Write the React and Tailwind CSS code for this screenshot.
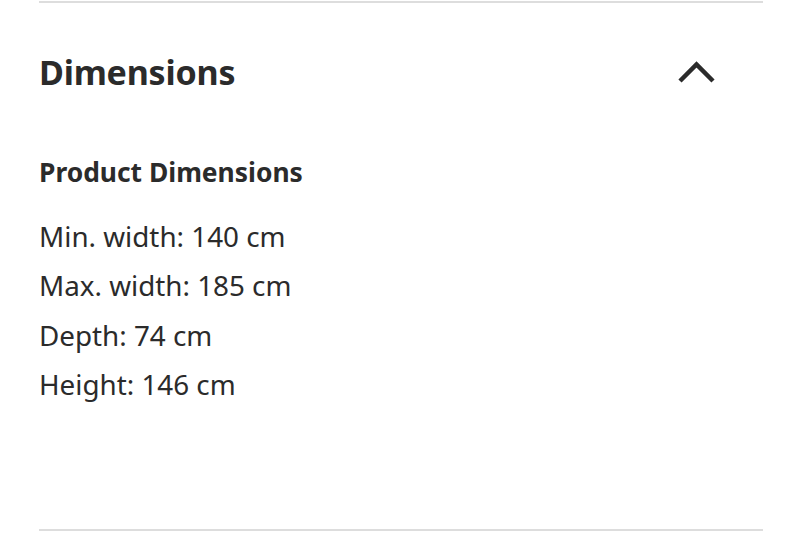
import React from 'react';

const rows = ['Min. width: 140 cm', 'Max. width: 185 cm', 'Depth: 74 cm', 'Height: 146 cm'];

const App = () => {
  return (
    <div
      className="w-[800px] h-[540px] bg-white text-[#2b2b2b] pl-[39px] pr-[37px] overflow-hidden"
      style={{ fontFamily: '"Noto Sans", "Open Sans", sans-serif' }}
    >
      <div className="border-t-2 border-b-2 border-[#dddddd] mt-[1px] h-[530px]">
        {/* Accordion header */}
        <div className="flex items-center justify-between h-[140px] pb-[2px]">
          <h2 className="text-[34px] font-bold leading-none tracking-[-0.2px]">Dimensions</h2>
          <svg width="40" height="24" viewBox="0 0 40 24" className="mr-[46px]">
            <path d="M3 21 L19.5 4.5 L36 21" fill="none" stroke="#2b2b2b" strokeWidth="4.5" />
          </svg>
        </div>

        {/* Content */}
        <div className="pt-[13px]">
          <h3 className="text-[26.4px] font-bold leading-[32px]">Product Dimensions</h3>
          <div className="mt-[24px] flex flex-col">
            {rows.map((r) => (
              <p key={r} className="text-[27.8px] leading-[49.3px]">{r}</p>
            ))}
          </div>
        </div>
      </div>
    </div>
  );
};

export default App;
